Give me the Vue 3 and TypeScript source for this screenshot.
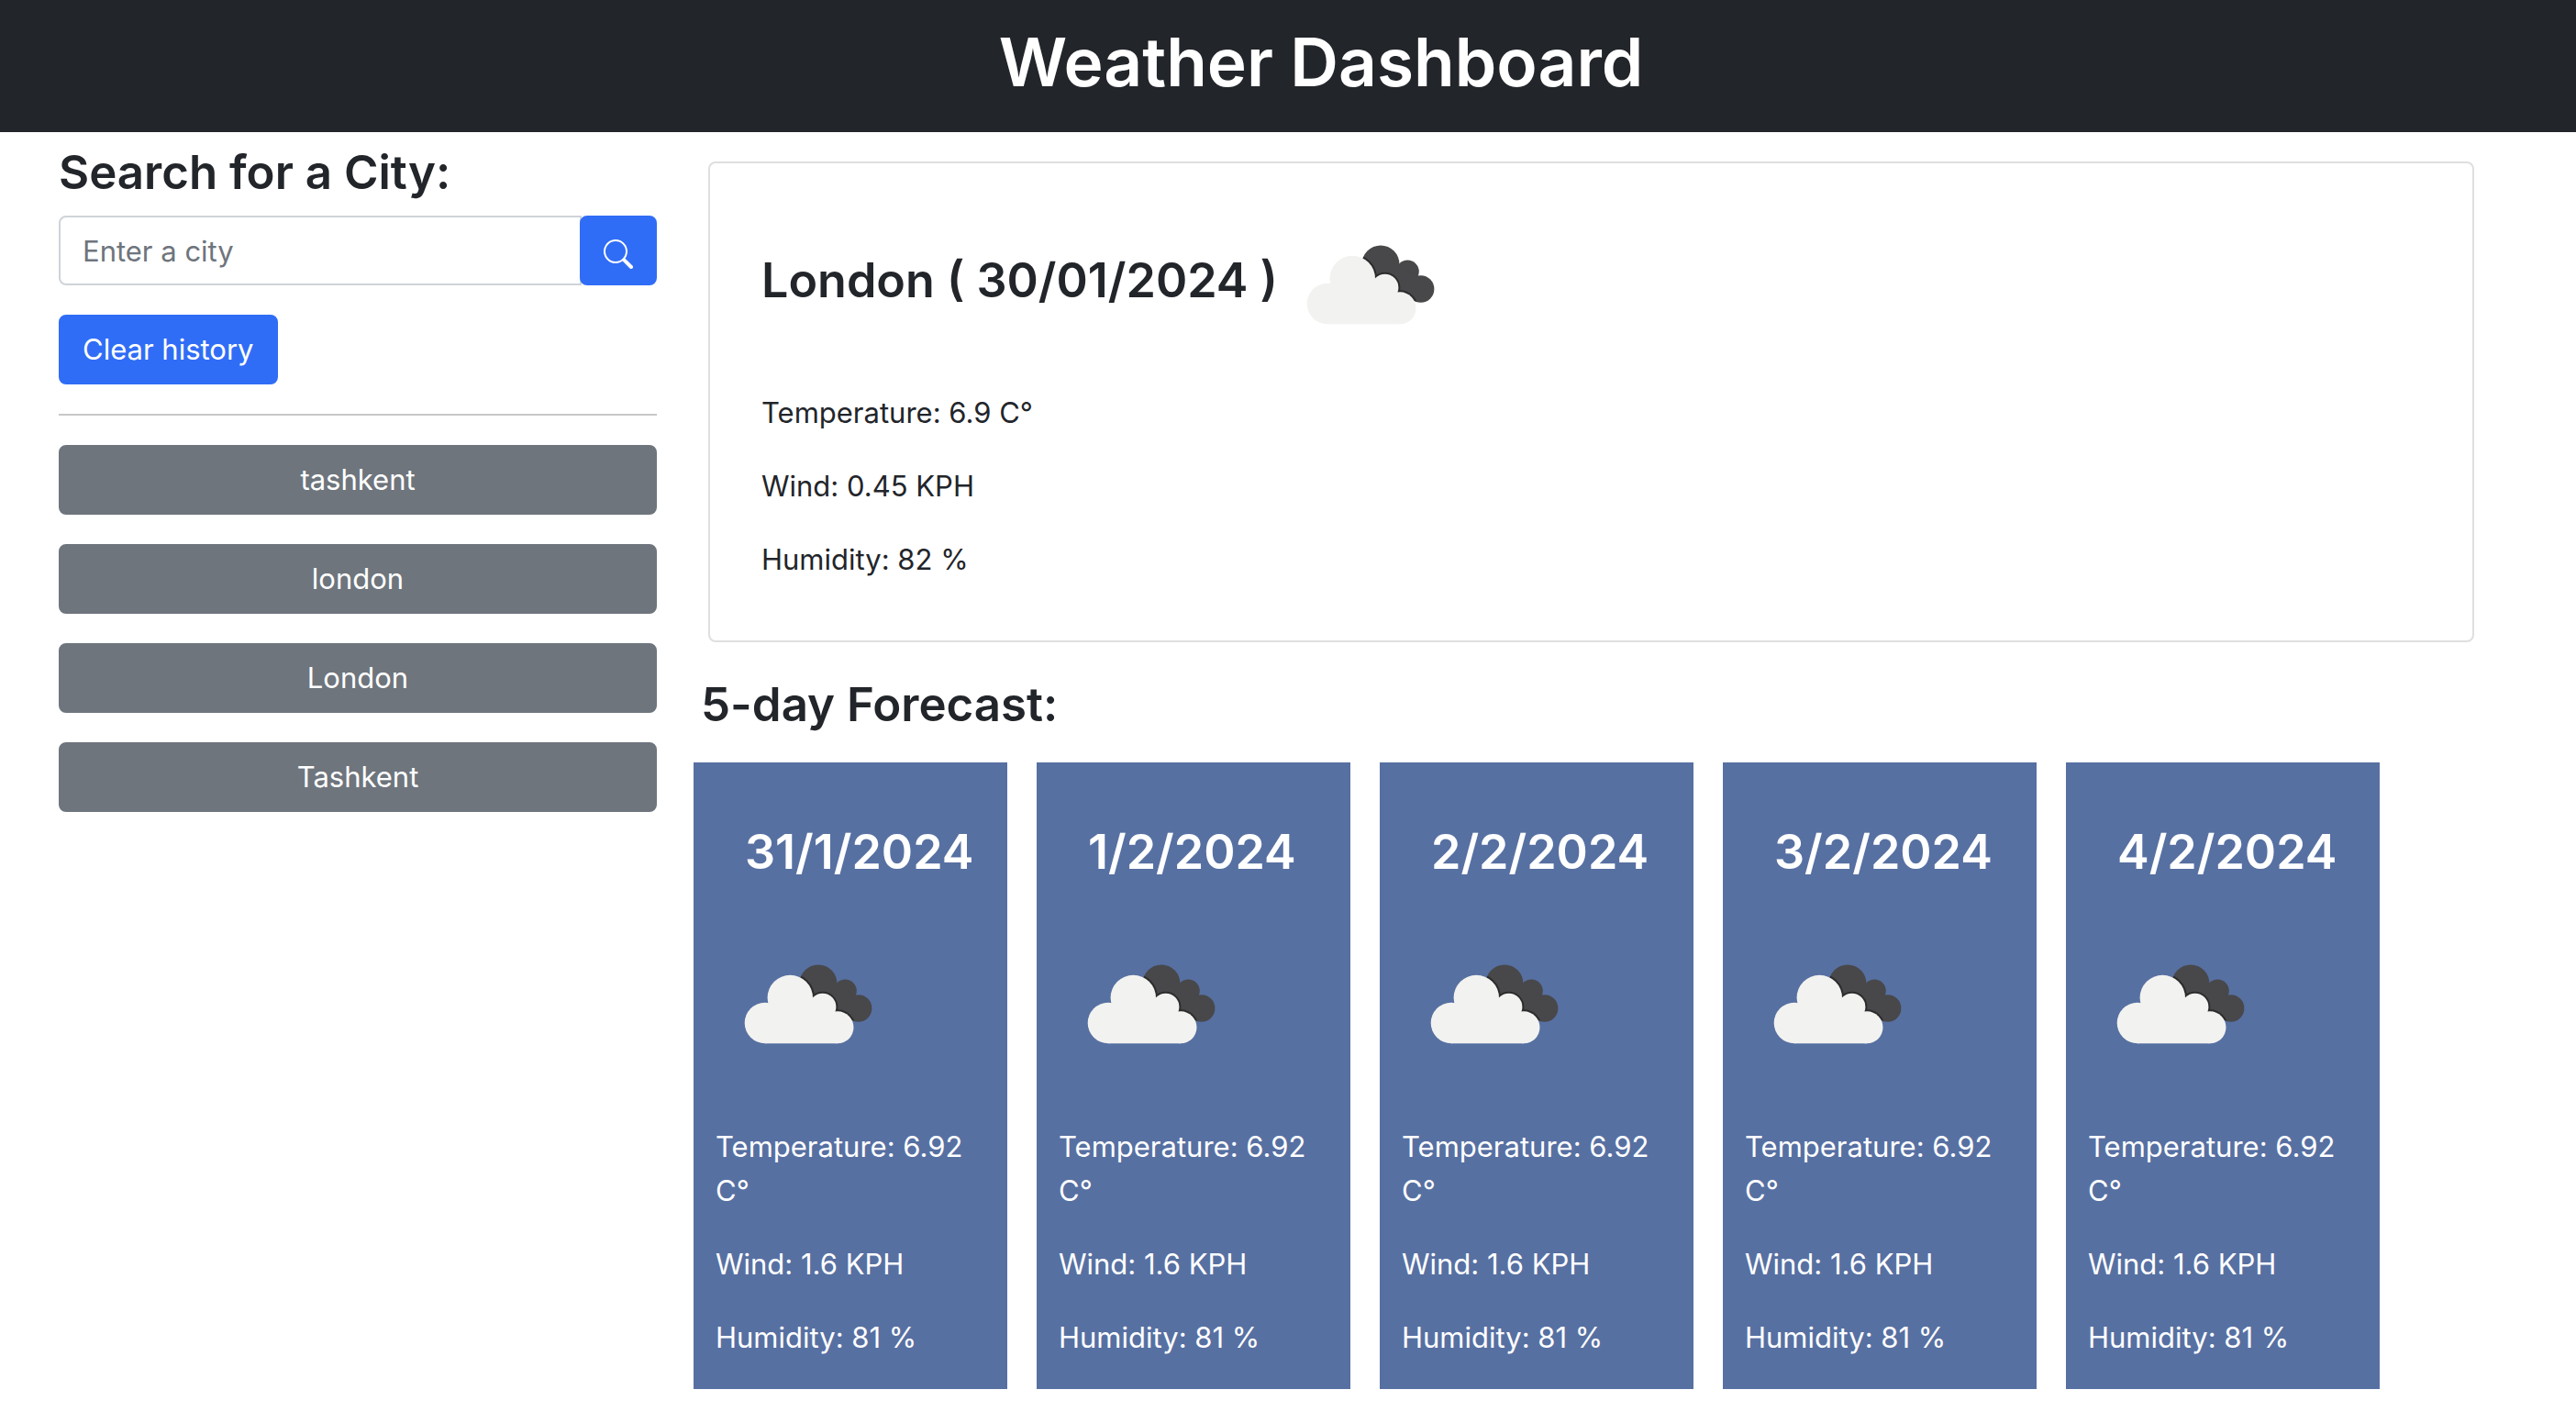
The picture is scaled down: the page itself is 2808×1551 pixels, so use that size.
<script setup lang="ts">
import { ref } from 'vue'

interface Reading {
  temperature: string
  wind: string
  humidity: string
}

interface ForecastDay extends Reading {
  date: string
}

const query = ref('')
const history = ref<string[]>(['tashkent', 'london', 'London', 'Tashkent'])

const current: Reading & { city: string; date: string } = {
  city: 'London',
  date: '30/01/2024',
  temperature: '6.9',
  wind: '0.45',
  humidity: '82',
}

const forecast: ForecastDay[] = ['31/1/2024', '1/2/2024', '2/2/2024', '3/2/2024', '4/2/2024'].map(
  (date) => ({ date, temperature: '6.92', wind: '1.6', humidity: '81' }),
)

function search(): void {
  const city = query.value.trim()
  if (city) history.value.unshift(city)
  query.value = ''
}

function clearHistory(): void {
  history.value = []
}
</script>

<template>
  <div class="page">
    <svg class="sprite" width="0" height="0" aria-hidden="true">
      <defs>
        <g id="cloud-back">
          <circle cx="112" cy="78" r="20.5" />
          <circle cx="141.3" cy="86" r="12.5" />
          <circle cx="155.7" cy="105" r="14.7" />
          <path d="M112 60 L132 78 L141 84 L154 92 L156 105 L146 119 L112 112 Z" />
        </g>
        <g id="cloud-front">
          <circle cx="54" cy="121" r="22.3" />
          <circle cx="81.3" cy="93.5" r="24.7" />
          <circle cx="116.7" cy="103.5" r="14.7" />
          <circle cx="133" cy="125.8" r="17.5" />
          <rect x="54" y="110" width="79" height="33.3" />
        </g>
        <clipPath id="cloud-back-clip">
          <circle cx="112" cy="78" r="20.5" />
          <circle cx="141.3" cy="86" r="12.5" />
          <circle cx="155.7" cy="105" r="14.7" />
          <path d="M112 60 L132 78 L141 84 L154 92 L156 105 L146 119 L112 112 Z" />
        </clipPath>
        <symbol id="broken-clouds" viewBox="0 0 200 200">
          <use href="#cloud-back" fill="#48484a" />
          <g clip-path="url(#cloud-back-clip)">
            <use href="#cloud-front" fill="none" stroke="#2c2c2d" stroke-width="4" />
          </g>
          <use href="#cloud-front" fill="#f2f2f0" />
          <path d="M80 96 H118 V130 H80 Z" fill="#f2f2f0" />
        </symbol>
      </defs>
    </svg>

    <header class="banner">
      <h1>Weather Dashboard</h1>
    </header>

    <main class="layout">
      <aside class="sidebar">
        <form @submit.prevent="search">
          <h3 class="title"><label for="city">Search for a City:</label></h3>
          <div class="search">
            <input id="city" v-model="query" type="text" placeholder="Enter a city" />
            <button class="btn primary icon" type="submit" aria-label="Search">
              <svg viewBox="0 0 16 16" width="32" height="32" fill="currentColor" aria-hidden="true">
                <path
                  d="M11.742 10.344a6.5 6.5 0 1 0-1.397 1.398h-.001c.03.04.062.078.098.115l3.85 3.85a1 1 0 0 0 1.415-1.414l-3.85-3.85a1.007 1.007 0 0 0-.115-.1zM12 6.5a5.5 5.5 0 1 1-11 0 5.5 5.5 0 0 1 11 0z"
                />
              </svg>
            </button>
          </div>
          <button class="btn primary" type="button" @click="clearHistory">Clear history</button>
        </form>
        <hr />
        <div class="history">
          <button v-for="city in history" :key="city" class="btn secondary" type="button">
            {{ city }}
          </button>
        </div>
      </aside>

      <section class="content">
        <article class="today">
          <h3>
            {{ current.city }} ( {{ current.date }} )<svg class="weather" role="img" aria-label="Broken clouds"><use href="#broken-clouds" /></svg>
          </h3>
          <p>Temperature: {{ current.temperature }} C°</p>
          <p>Wind: {{ current.wind }} KPH</p>
          <p>Humidity: {{ current.humidity }} %</p>
        </article>

        <h3 class="title indented">5-day Forecast:</h3>
        <div class="forecast">
          <article v-for="day in forecast" :key="day.date" class="day">
            <h3>{{ day.date }}</h3>
            <svg class="weather" role="img" aria-label="Broken clouds"><use href="#broken-clouds" /></svg>
            <p>Temperature: {{ day.temperature }} C°</p>
            <p>Wind: {{ day.wind }} KPH</p>
            <p>Humidity: {{ day.humidity }} %</p>
          </article>
        </div>
      </section>
    </main>
  </div>
</template>

<style>
body {
  margin: 0;
  background: #fff;
}
</style>

<style scoped>
.page {
  color: #22252a;
  font-family: Inter, 'Liberation Sans', sans-serif;
  font-size: 31px;
  line-height: 48px;
}

.page * {
  box-sizing: border-box;
}

.sprite {
  position: absolute;
}

h1,
h3,
p {
  margin: 0;
}

h1,
h3 {
  font-weight: 600;
}

h1 {
  font-size: 73px;
  line-height: 96px;
}

h3 {
  font-size: 52px;
  line-height: 67px;
}

.title {
  padding-top: 4px;
  font-size: 51px;
  line-height: 63px;
}

.indented {
  padding-left: 8px;
}

.banner {
  padding: 20px 0 28px 72px;
  background: #22252a;
  color: #fff;
  text-align: center;
}

.layout {
  display: grid;
  grid-template-columns: minmax(0, 163fr) minmax(0, 513fr);
  gap: 40px;
  padding-left: 64px;
}

.sidebar {
  padding-top: 8px;
}

.search {
  display: flex;
  margin: 16px 0 32px;
}

input {
  flex: 1;
  min-width: 0;
  height: 76px;
  margin-right: -2px;
  padding: 12px 24px;
  border: 2px solid #ced4d9;
  border-radius: 8px 0 0 8px;
  background: #fff;
  color: inherit;
  font: inherit;
}

input::placeholder {
  color: #6e757d;
  opacity: 1;
}

.btn {
  padding: 12px 24px;
  border: 2px solid transparent;
  border-radius: 8px;
  color: #fff;
  font: inherit;
  cursor: pointer;
}

.primary {
  border-color: #306df6;
  background: #306df6;
}

.secondary {
  border-color: #6e757d;
  background: #6e757d;
}

.icon {
  display: flex;
  align-items: center;
  padding: 16px 24px 8px;
}

hr {
  height: 2px;
  margin: 32px 0;
  border: 0;
  background: #c8c8c9;
}

.history {
  display: grid;
  gap: 32px;
}

.today {
  display: grid;
  gap: 32px;
  margin: 32px 111px 32px 16px;
  padding: 32px 56px 64px;
  border: 2px solid #dfdfdf;
  border-radius: 8px;
}

.today h3 {
  margin-bottom: -16px;
}

.weather {
  width: 200px;
  height: 200px;
  vertical-align: middle;
}

.forecast {
  display: flex;
  gap: 32px;
  margin: 32px 0;
}

.day {
  display: grid;
  grid-template-columns: minmax(0, 1fr);
  flex: 0 0 calc(100% / 6);
  gap: 32px;
  min-width: 0;
  padding: 64px 24px 32px;
  background: #5770a2;
  color: #fff;
}

.day h3 {
  padding-left: 32px;
  white-space: nowrap;
}
</style>
